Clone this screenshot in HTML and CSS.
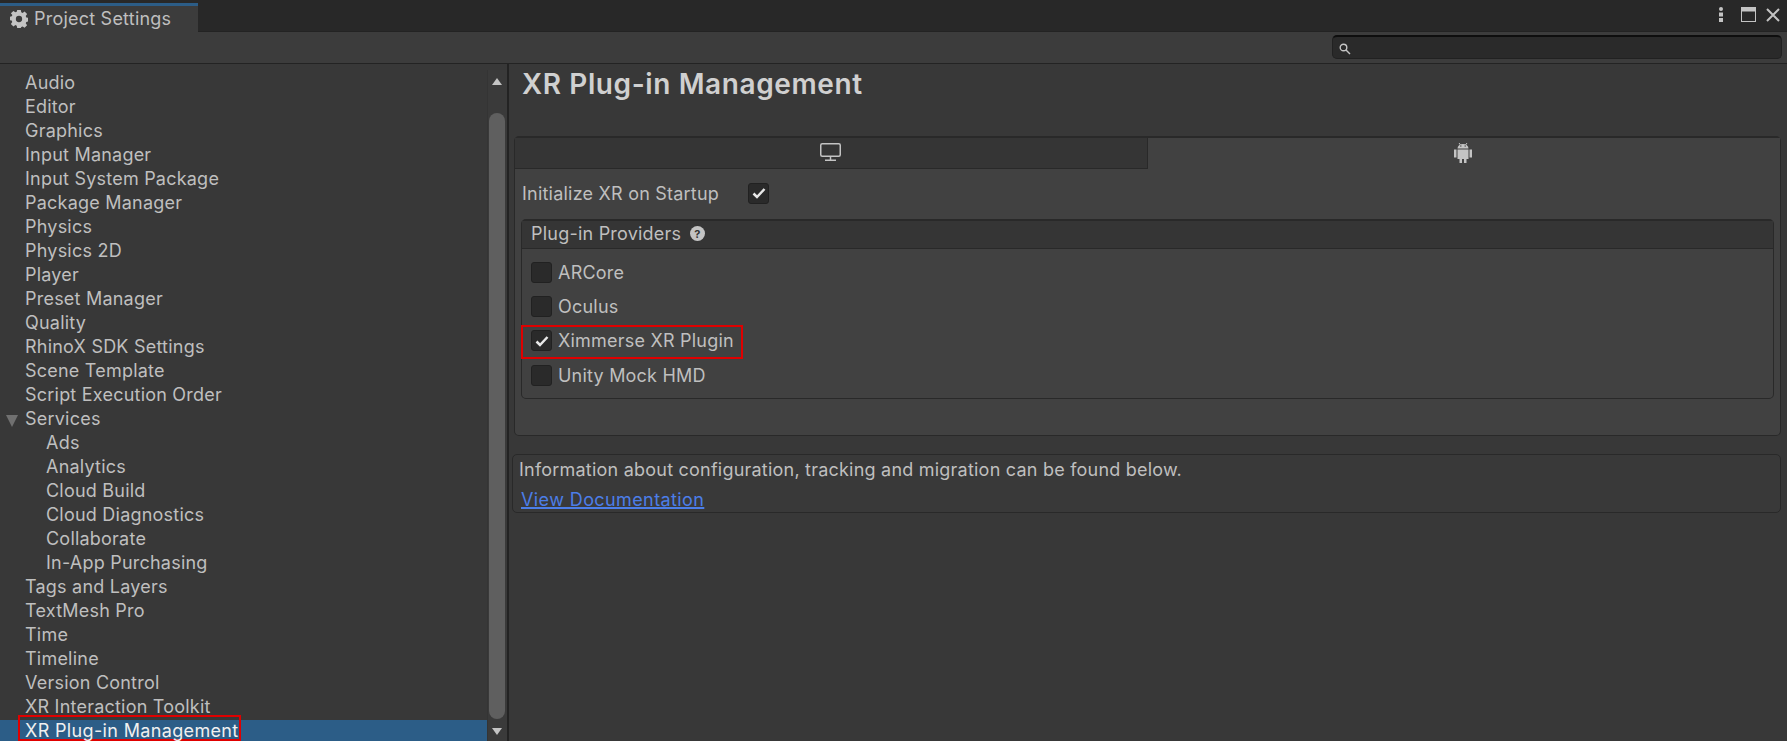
FILE: index.html
```html
<!DOCTYPE html>
<html>
  <head>
    <title>Project Settings</title>
    <link rel="stylesheet" href="styles.css">
  </head>
  <body>
    <div class="titlebar">
      <div class="tab">
        <svg class="gear" width="18" height="18" viewBox="0 0 20 20"><path fill-rule="evenodd" fill="#c4c4c4" d="M8 0h4l.5 2.600 1.500.6 2.200-1.500 2.800 2.800-1.500 2.200.6 1.500 2.400.5v4l-2.400.5-.6 1.500 1.500 2.200-2.800 2.800-2.200-1.500-1.500.6L12 20H8l-.5-2.600-1.500-.6-2.200 1.500L1 15.500l1.500-2.200-.6-1.500L0 11.500v-4l2-.5.6-1.500L1 3.500 3.800 1 6 2.500l1.500-.6zM10 6.500a3.500 3.500 0 1 0 0 7 3.500 3.500 0 0 0 0-7z"/></svg>
        <span>Project Settings</span>
      </div>
      <div class="winbtns">
        <svg class="dots" width="6" height="15" viewBox="0 0 6 15"><circle cx="3" cy="2" r="2" fill="#c4c4c4"/><rect x="1" y="5.500" width="4" height="4" fill="#c4c4c4"/><rect x="1" y="11" width="4" height="4" fill="#c4c4c4"/></svg>
        <svg width="15" height="15" viewBox="0 0 15 15"><rect x=".5" y=".5" width="14" height="14" fill="none" stroke="#c4c4c4" stroke-width="1"/><rect x="0" y="0" width="15" height="4.500" fill="#c4c4c4"/></svg>
        <svg width="14" height="14" viewBox="0 0 14 14"><path d="M1 1l12 12M13 1L1 13" stroke="#c4c4c4" stroke-width="2" fill="none"/></svg>
      </div>
    </div>
    <div class="toolbar">
      <div class="search">
        <svg class="search-icon" width="12" height="12" viewBox="0 0 12 12"><circle cx="4.500" cy="4.500" r="3.300" fill="none" stroke="#c4c4c4" stroke-width="1.400"/><path d="M7 7l4 4" stroke="#c4c4c4" stroke-width="1.500"/></svg>
      </div>
    </div>
    <div class="main">
      <div class="sidebar">
        <ul class="nav">
          <li>Audio</li>
          <li>Editor</li>
          <li>Graphics</li>
          <li>Input Manager</li>
          <li>Input System Package</li>
          <li>Package Manager</li>
          <li>Physics</li>
          <li>Physics 2D</li>
          <li>Player</li>
          <li>Preset Manager</li>
          <li>Quality</li>
          <li>RhinoX SDK Settings</li>
          <li>Scene Template</li>
          <li>Script Execution Order</li>
          <li class="parent">Services</li>
          <li class="sub">Ads</li>
          <li class="sub">Analytics</li>
          <li class="sub">Cloud Build</li>
          <li class="sub">Cloud Diagnostics</li>
          <li class="sub">Collaborate</li>
          <li class="sub">In-App Purchasing</li>
          <li>Tags and Layers</li>
          <li>TextMesh Pro</li>
          <li>Time</li>
          <li>Timeline</li>
          <li>Version Control</li>
          <li>XR Interaction Toolkit</li>
          <li class="selected"><span class="red-label">XR Plug-in Management</span></li>
        </ul>
        <div class="scrollbar">
          <div class="arrow-up"></div>
          <div class="track"><div class="thumb"></div></div>
          <div class="arrow-down"></div>
        </div>
      </div>
      <div class="content">
        <h1>XR Plug-in Management</h1>
        <div class="tabbox">
          <div class="tabhead">
            <div class="ptab">
              <svg width="21" height="18" viewBox="0 0 21 18"><rect x=".75" y=".75" width="19.500" height="12.500" rx="1.500" fill="none" stroke="#c4c4c4" stroke-width="1.500"/><path d="M10.500 14v3M5 17.250h11" stroke="#c4c4c4" stroke-width="1.500"/></svg>
            </div>
            <div class="ptab active">
              <svg width="18" height="21" viewBox="0 0 18 21"><path fill="#c4c4c4" d="M3.500 6.500a5.500 4.500 0 0 1 11 0zM0 7.500h2.500v8H0zM15.500 7.500H18v8h-2.500zM3.500 7.500h11v9.500h-11zM5.500 17h2.500v4H5.500zM10 17h2.500v4H10z"/><path d="M5 1l1.500 2M13 1l-1.500 2" stroke="#c4c4c4"/><path d="M6 4h1.500M10.500 4H12" stroke="#414141" stroke-width="1.200"/></svg>
            </div>
          </div>
          <div class="tabbody">
            <div class="init">
              <span class="init-label">Initialize XR on Startup</span>
              <span class="check on"><svg viewBox="0 0 14 12" width="14" height="12"><path d="M1.500 6.500l3.500 3.500 7.500-8" fill="none" stroke="#e8e8e8" stroke-width="2.500"/></svg></span>
            </div>
            <div class="providers">
              <div class="prov-head">Plug-in Providers
                <svg width="15" height="15" viewBox="0 0 15 15"><circle cx="7.500" cy="7.500" r="7.500" fill="#c4c4c4"/><text x="7.500" y="11.500" class="qmark" text-anchor="middle">?</text></svg>
              </div>
              <div class="prov-list">
                <div class="prov"><span class="check"></span>ARCore</div>
                <div class="prov"><span class="check"></span>Oculus</div>
                <div class="prov marked"><span class="check on"><svg viewBox="0 0 14 12" width="14" height="12"><path d="M1.500 6.500l3.500 3.500 7.500-8" fill="none" stroke="#e8e8e8" stroke-width="2.500"/></svg></span>Ximmerse XR Plugin</div>
                <div class="prov"><span class="check"></span>Unity Mock HMD</div>
              </div>
            </div>
          </div>
        </div>
        <div class="info">
          <div>Information about configuration, tracking and migration can be found below.</div>
          <a class="doclink">View Documentation</a>
        </div>
      </div>
    </div>
  </body>
</html>
```

FILE: styles.css
```css
* {
  box-sizing: border-box;
}
html, body {
  margin: 0;
  height: 741px;
  overflow: hidden;
}
body {
  background-color: #383838;
  color: #bfbfbf;
  font-family: Inter, "Liberation Sans", sans-serif;
  font-size: 18px;
  letter-spacing: .22px;
}

/*title bar*/
.titlebar {
  height: 32px;
  background-color: #282828;
  border-bottom: 1px solid #232323;
  display: flex;
  justify-content: space-between;
}
.tab {
  width: 198px;
  height: 29px;
  margin-top: 3px;
  border-top: 3px solid #2c5d87;
  background-color: #3c3c3c;
  display: flex;
  align-items: center;
  gap: 6px;
  padding-left: 10px;
  padding-bottom: 1px;
}
.winbtns {
  display: flex;
  align-items: center;
  gap: 10px;
  padding: 0 7px 2px 0;
}
.dots {
  margin-right: 7px;
}

.toolbar {
  height: 32px;
  background-color: #3c3c3c;
  border-bottom: 1px solid #232323;
  display: flex;
  justify-content: flex-end;
  padding: 3px 5px 0 0;
}
.search {
  width: 450px;
  height: 24px;
  background-color: #2a2a2a;
  border: 1px solid #212121;
  border-top: 2px solid #0e0e0e;
  border-radius: 5px;
  padding: 6px 0 0 6px;
}
.search-icon {
  display: block;
}

/*main*/
.main {
  display: flex;
  height: 677px;
}
.sidebar {
  width: 509px;
  flex-shrink: 0;
  display: flex;
  border-right: 2px solid #232323;
  overflow: hidden;
}
.nav {
  list-style: none;
  margin: 0;
  padding: 7px 0 0 0;
  flex: 1;
}
.nav li {
  height: 24px;
  line-height: 24px;
  padding-left: 25px;
  white-space: nowrap;
  position: relative;
}
.nav li.sub {
  padding-left: 46px;
}
.nav li.parent::before {
  content: "";
  position: absolute;
  left: 6px;
  top: 8px;
  border-left: 6.500px solid transparent;
  border-right: 6.500px solid transparent;
  border-top: 12px solid #707070;
}
.nav li.selected {
  background-color: #2c5d87;
  background-clip: padding-box;
  border-top: 1px solid transparent;
  line-height: 22px;
  color: #f0f0f0;
}
.red-label {
  position: absolute;
  left: 18px;
  top: -5px;
  width: 223px;
  height: 26px;
  padding: 2px 0 0 5px;
  border: 2px solid #e00000;
  line-height: 24px;
  letter-spacing: .35px;
}

.scrollbar {
  width: 20px;
  margin-top: 6px;
  background-color: #3a3a3a;
  border-left: 1px solid #343434;
  display: flex;
  flex-direction: column;
  align-items: center;
}
.arrow-up {
  margin-top: 8px;
  margin-right: 1px;
  border-left: 5px solid transparent;
  border-right: 5px solid transparent;
  border-bottom: 7px solid #c4c4c4;
}
.track {
  flex: 1;
  width: 100%;
  padding: 28px 2px 0 1px;
}
.thumb {
  height: 606px;
  background-color: #5f5f5f;
  border-radius: 8px;
}
.arrow-down {
  margin-bottom: 6px;
  margin-right: 1px;
  border-left: 5px solid transparent;
  border-right: 5px solid transparent;
  border-top: 7px solid #c4c4c4;
}

.content {
  flex: 1;
  padding: 0 6px 0 3px;
}
h1 {
  margin: 0;
  padding: 0 0 0 10px;
  height: 72px;
  font-size: 28px;
  font-weight: 600;
  letter-spacing: .6px;
  line-height: 40px;
  color: #d0d0d0;
}

/*platform tabs*/
.tabbox {
  height: 300px;
  background-color: #414141;
  border: 1px solid #292929;
  border-top-width: 2px;
  border-radius: 5px;
  margin: 0 0 18px 2px;
}
.tabhead {
  display: flex;
  height: 31px;
}
.ptab {
  flex: 1;
  display: flex;
  justify-content: center;
  align-items: center;
  background-color: #353535;
  border-bottom: 1px solid #292929;
  padding: 0 2px 3px 0;
}
.ptab.active {
  background-color: #414141;
  border-bottom: none;
  border-left: 1px solid #292929;
}
.tabbody {
  padding: 0 6px;
}
.init {
  display: flex;
  align-items: center;
  height: 48px;
  padding-left: 1px;
}
.init-label {
  width: 226px;
}
.check {
  width: 21px;
  height: 21px;
  background-color: #2a2a2a;
  border: 1px solid #212121;
  border-radius: 3px;
  display: flex;
  align-items: center;
  justify-content: center;
  flex-shrink: 0;
}
.providers {
  border: 1px solid #292929;
  border-top-width: 2px;
  border-radius: 5px;
  height: 180px;
  margin-top: 2px;
}
.prov-head {
  height: 28px;
  background-color: #353535;
  border-bottom: 1px solid #292929;
  display: flex;
  align-items: center;
  gap: 9px;
  padding: 0 0 2px 9px;
}
.qmark {
  font-size: 11px;
  font-weight: 700;
  fill: #353535;
}
.prov-list {
  padding-top: 6px;
}
.prov {
  height: 34.300px;
  display: flex;
  align-items: center;
  gap: 6px;
  padding-left: 9px;
  width: 222px;
  position: relative;
  white-space: nowrap;
}
.prov.marked::after {
  content: "";
  box-sizing: border-box;
  position: absolute;
  left: -1px;
  top: 1px;
  width: 222px;
  height: 34px;
  border: 2px solid #e00000;
}

/*info*/
.info {
  height: 59px;
  background-color: #393939;
  border: 1px solid #292929;
  border-radius: 5px;
  padding: 3px 0 0 6px;
  line-height: 24px;
}
.doclink {
  display: inline-block;
  margin: 6px 0 0 2px;
  color: #4c7ee8;
  letter-spacing: .4px;
  text-decoration: underline;
  text-decoration-thickness: 2px;
}
```
